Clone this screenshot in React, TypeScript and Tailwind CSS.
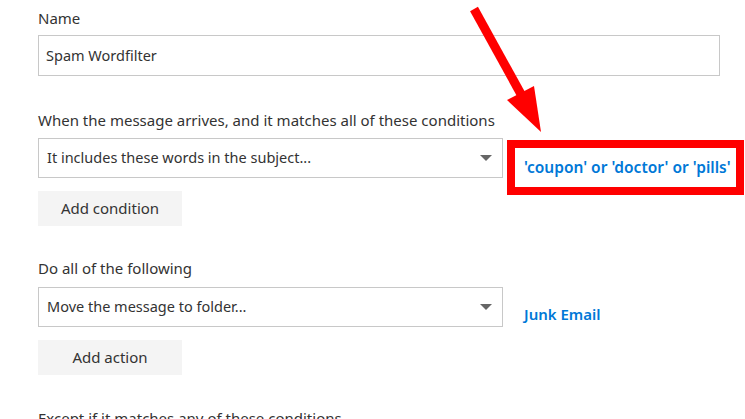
import React from 'react';

const font = { fontFamily: '"Noto Sans", "Open Sans", Arial, sans-serif' };

function Caret() {
  return (
    <svg width="12" height="6" viewBox="0 0 12 6" className="shrink-0">
      <path d="M0 0 L12 0 L6 6 Z" fill="#666666" />
    </svg>
  );
}

function Dropdown({ label }: { label: string }) {
  return (
    <div className="flex items-center justify-between w-[465px] h-[40px] border border-[#c8c8c8] pl-[8px] pr-[10px] bg-white">
      <span className="text-[14.5px] text-[#333333]">{label}</span>
      <Caret />
    </div>
  );
}

function GrayButton({ label }: { label: string }) {
  return (
    <button className="w-[144px] h-[35px] bg-[#f4f4f4] text-[15px] text-[#333333]">
      {label}
    </button>
  );
}

export default function App() {
  return (
    <div className="relative w-[745px] h-[419px] overflow-hidden bg-white" style={font}>
      <div className="pl-[38px] pt-[8px]">
        <div className="text-[15px] leading-5 text-[#333333]">Name</div>
        <div className="mt-[7px] w-[682px] h-[41px] border border-[#c8c8c8] flex items-center pl-[7px]">
          <span className="text-[14.5px] text-[#333333]">Spam Wordfilter</span>
        </div>

        <div className="mt-[34px] text-[15px] leading-5 text-[#333333]">
          When the message arrives, and it matches all of these conditions
        </div>
        <div className="mt-[8px] flex items-start">
          <Dropdown label="It includes these words in the subject..." />
          <div className="ml-[4px] mt-[2px] border-[8px] border-[#ff0000] h-[55px] w-[237px] flex items-center pl-[9px]">
            <span className="text-[15.5px] font-semibold text-[#0078d7]">'coupon' or 'doctor' or 'pills'</span>
          </div>
        </div>
        <div className="-mt-[4px]">
          <GrayButton label="Add condition" />
        </div>

        <div className="mt-[32px] text-[15px] leading-5 text-[#333333]">Do all of the following</div>
        <div className="mt-[9px] flex items-start">
          <Dropdown label="Move the message to folder..." />
          <span className="ml-[21px] mt-[17px] text-[15px] leading-5 font-semibold text-[#0078d7]">Junk Email</span>
        </div>
        <div className="mt-[13px]">
          <GrayButton label="Add action" />
        </div>

        <div className="mt-[33px] text-[15px] leading-5 text-[#333333]">
          Except if it matches any of these conditions
        </div>
      </div>

      <svg className="absolute left-0 top-0 pointer-events-none" width="745" height="419">
        <line x1="474" y1="9" x2="522" y2="96" stroke="#ff0000" strokeWidth="9" />
        <polygon points="507,100 534,86 541,132" fill="#ff0000" />
      </svg>
    </div>
  );
}
